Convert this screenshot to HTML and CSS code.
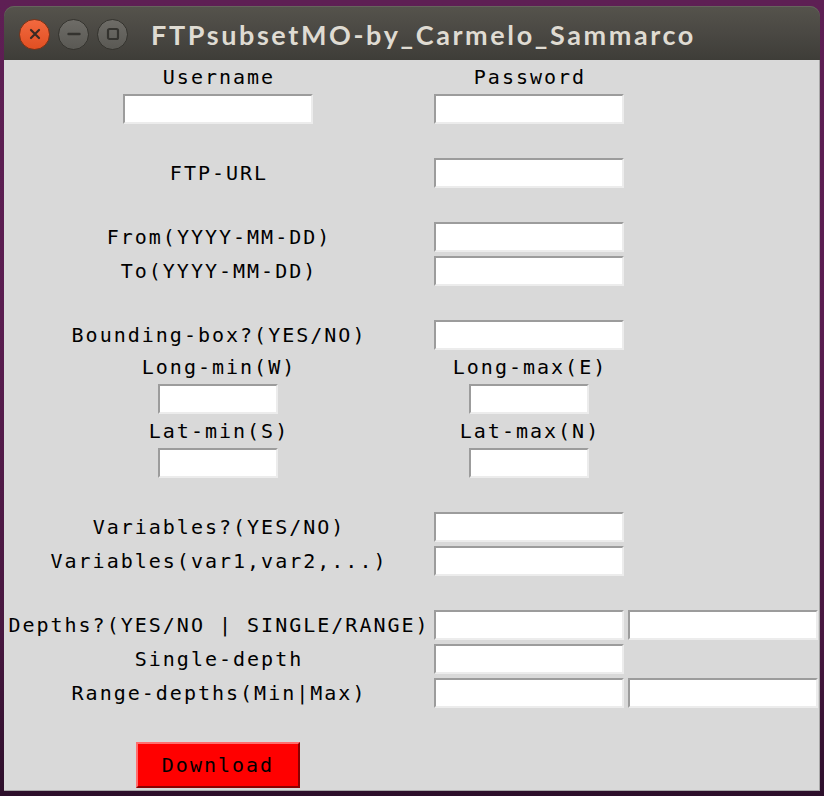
FILE: index.html
```html
<!DOCTYPE html>
<html lang="en">
<head>
<meta charset="utf-8">
<title>FTPsubsetMO-by_Carmelo_Sammarco</title>
<link rel="stylesheet" href="styles.css">
</head>
<body>
<div class="window">
  <div class="titlebar">
    <div class="controls">
      <span class="ctl close"><svg width="12" height="12" viewBox="0 0 12 12"><path d="M2 2 L10 10 M10 2 L2 10" stroke="#3a2a24" stroke-width="2.2" stroke-linecap="round"/></svg></span>
      <span class="ctl"><svg width="14" height="14" viewBox="0 0 14 14"><path d="M1.5 7 H12.5" stroke="#34332f" stroke-width="2.4" stroke-linecap="round"/></svg></span>
      <span class="ctl"><svg width="14" height="14" viewBox="0 0 14 14"><rect x="2" y="2" width="10" height="10" rx="1.5" fill="none" stroke="#34332f" stroke-width="2.2"/></svg></span>
    </div>
    <div class="title">FTPsubsetMO-by_Carmelo_Sammarco</div>
  </div>
  <div class="content">
    <div class="grid">
      <div class="cell lab c0 h30">Username</div>
      <div class="cell lab c1 h30">Password</div>
      <div class="cell c0 h34"><input class="entry" type="text"></div>
      <div class="cell c1 h34"><input class="entry" type="password"></div>
      <div class="blank"></div>

      <div class="cell lab c0 h34">FTP-URL</div>
      <div class="cell c1 h34"><input class="entry" type="text"></div>
      <div class="blank"></div>

      <div class="cell lab c0 h34">From(YYYY-MM-DD)</div>
      <div class="cell c1 h34"><input class="entry" type="text"></div>
      <div class="cell lab c0 h34">To(YYYY-MM-DD)</div>
      <div class="cell c1 h34"><input class="entry" type="text"></div>
      <div class="blank"></div>

      <div class="cell lab c0 h34">Bounding-box?(YES/NO)</div>
      <div class="cell c1 h34"><input class="entry" type="text"></div>
      <div class="cell lab c0 h30">Long-min(W)</div>
      <div class="cell lab c1 h30">Long-max(E)</div>
      <div class="cell c0 h34"><input class="entry small" type="text"></div>
      <div class="cell c1 h34"><input class="entry small" type="text"></div>
      <div class="cell lab c0 h30">Lat-min(S)</div>
      <div class="cell lab c1 h30">Lat-max(N)</div>
      <div class="cell c0 h34"><input class="entry small" type="text"></div>
      <div class="cell c1 h34"><input class="entry small" type="text"></div>
      <div class="blank"></div>

      <div class="cell lab c0 h34">Variables?(YES/NO)</div>
      <div class="cell c1 h34"><input class="entry" type="text"></div>
      <div class="cell lab c0 h34">Variables(var1,var2,...)</div>
      <div class="cell c1 h34"><input class="entry" type="text"></div>
      <div class="blank"></div>

      <div class="cell lab c0 h34">Depths?(YES/NO | SINGLE/RANGE)</div>
      <div class="cell c1 h34"><input class="entry" type="text"></div>
      <div class="cell c2 h34"><input class="entry" type="text"></div>
      <div class="cell lab c0 h34">Single-depth</div>
      <div class="cell c1 h34"><input class="entry" type="text"></div>
      <div class="cell lab c0 h34">Range-depths(Min|Max)</div>
      <div class="cell c1 h34"><input class="entry" type="text"></div>
      <div class="cell c2 h34"><input class="entry" type="text"></div>
      <div class="blank"></div>

      <div class="cell c0 h50"><button class="download" type="button">Download</button></div>
    </div>
  </div>
</div>
</body>
</html>
```

FILE: styles.css
```css
html, body {
  margin: 0;
  padding: 0;
}
body {
  width: 824px;
  height: 796px;
  overflow: hidden;
  background: linear-gradient(to bottom, #5e1f54 0%, #5a1d50 40%, #47173f 80%, #2d0f2b 100%);
}
.window {
  margin: 6px 0 0 4px;
  width: 816px;
}
.titlebar {
  height: 54px;
  border-radius: 10px 10px 0 0;
  background: linear-gradient(to bottom, #55534c 0%, #4a4843 50%, #3e3d38 100%);
  display: flex;
  align-items: center;
  box-shadow: inset 0 1px 0 #66645d;
}
.controls {
  display: flex;
  gap: 8px;
  margin-left: 15px;
  margin-top: 2px;
}
.ctl {
  width: 31px;
  height: 31px;
  border-radius: 50%;
  box-sizing: border-box;
  border: 1px solid #35342f;
  background: linear-gradient(to bottom, #6e6c67, #5a5954);
  display: flex;
  align-items: center;
  justify-content: center;
}
.ctl.close {
  background: linear-gradient(to bottom, #f2693f, #e14f22);
  border-color: #7e3317;
}
.title {
  margin-left: 23px;
  margin-top: 3px;
  font-family: "Lato", "Open Sans", sans-serif;
  font-weight: 700;
  font-size: 27px;
  color: #dfdbd2;
  letter-spacing: 2.6px;
}
.content {
  background: #d9d9d9;
  padding-top: 2px;
  height: 728px;
  border-right: 1px solid #a8a8a8;
  border-bottom: 1px solid #a8a8a8;
  box-sizing: content-box;
  width: 815px;
}
.grid {
  display: grid;
  grid-template-columns: 428px 194px 194px;
  font-family: "DejaVu Sans Mono", "Liberation Mono", monospace;
  font-size: 20px;
  letter-spacing: 2px;
  color: #000;
}
.cell {
  display: flex;
  align-items: center;
  justify-content: center;
  white-space: nowrap;
}
.lab {
  padding-left: 2px;
}
.c0 { grid-column: 1; }
.c1 { grid-column: 2; }
.c2 { grid-column: 3; }
.h30 { height: 30px; }
.h34 { height: 34px; }
.h50 { height: 50px; }
.blank {
  grid-column: 1 / -1;
  height: 30px;
}
.entry {
  appearance: none;
  -webkit-appearance: none;
  box-sizing: border-box;
  width: 190px;
  height: 30px;
  margin: 0;
  padding: 0;
  background: #ffffff;
  border: 2px solid;
  border-color: #9c9c9c #ececec #ececec #9c9c9c;
  outline: none;
}
.entry.small {
  width: 120px;
}
.download {
  box-sizing: border-box;
  width: 164px;
  height: 46px;
  margin: 0;
  padding: 0;
  background: #ff0000;
  border: 2px solid;
  border-color: #ff6e6e #8a0000 #8a0000 #ff6e6e;
  font-family: "DejaVu Sans Mono", "Liberation Mono", monospace;
  font-size: 20px;
  letter-spacing: 2px;
  color: #000;
}
```
